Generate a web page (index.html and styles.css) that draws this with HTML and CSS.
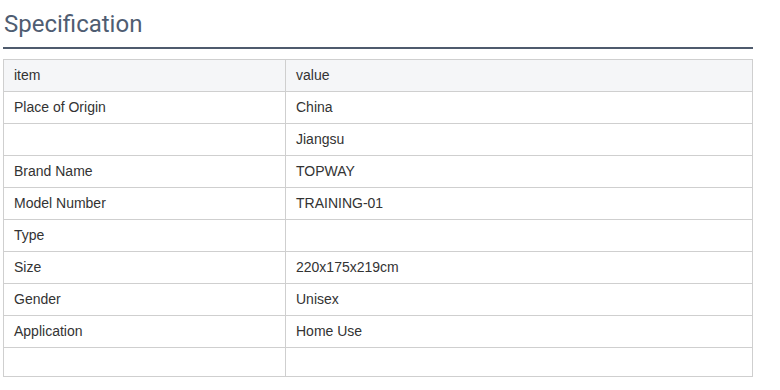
FILE: index.html
```html
<!DOCTYPE html>
<html>
<head>
<meta charset="utf-8">
<link rel="stylesheet" href="styles.css">
</head>
<body>
<div class="spec">
  <h2 class="spec-title">Specification</h2>
  <table class="spec-table">
    <tr class="head"><td class="c1">item</td><td>value</td></tr>
    <tr><td class="c1">Place of Origin</td><td>China</td></tr>
    <tr><td class="c1"></td><td>Jiangsu</td></tr>
    <tr><td class="c1">Brand Name</td><td>TOPWAY</td></tr>
    <tr><td class="c1">Model Number</td><td>TRAINING-01</td></tr>
    <tr><td class="c1">Type</td><td></td></tr>
    <tr><td class="c1">Size</td><td>220x175x219cm</td></tr>
    <tr><td class="c1">Gender</td><td>Unisex</td></tr>
    <tr><td class="c1">Application</td><td>Home Use</td></tr>
    <tr class="empty"><td class="c1"></td><td></td></tr>
  </table>
</div>
</body>
</html>
```
FILE: styles.css
```css
html, body {
  margin: 0;
  padding: 0;
  background: #fff;
}
.spec {
  padding: 0 27px 0 3px;
  font-family: "Liberation Sans", Arial, sans-serif;
}
.spec-title {
  margin: 0;
  padding: 9px 0 0 1px;
  height: 38px;
  font-family: Roboto, "Liberation Sans", sans-serif;
  font-weight: 400;
  font-size: 24px;
  line-height: 30px;
  color: #4f5d72;
  border-bottom: 2px solid #4f5b6d;
  box-sizing: content-box;
}
.spec-table {
  margin-top: 10px;
  width: 100%;
  border-collapse: collapse;
  font-size: 14px;
  color: #333;
}
.spec-table td {
  border: 1px solid #cfcfcf;
  height: 32px;
  padding: 0 10px 2px;
  box-sizing: border-box;
  line-height: 16px;
}
.spec-table .c1 {
  width: 282px;
}
.spec-table .head td {
  background: #f5f6f8;
}
.spec-table .empty td {
  height: 29px;
}
```
